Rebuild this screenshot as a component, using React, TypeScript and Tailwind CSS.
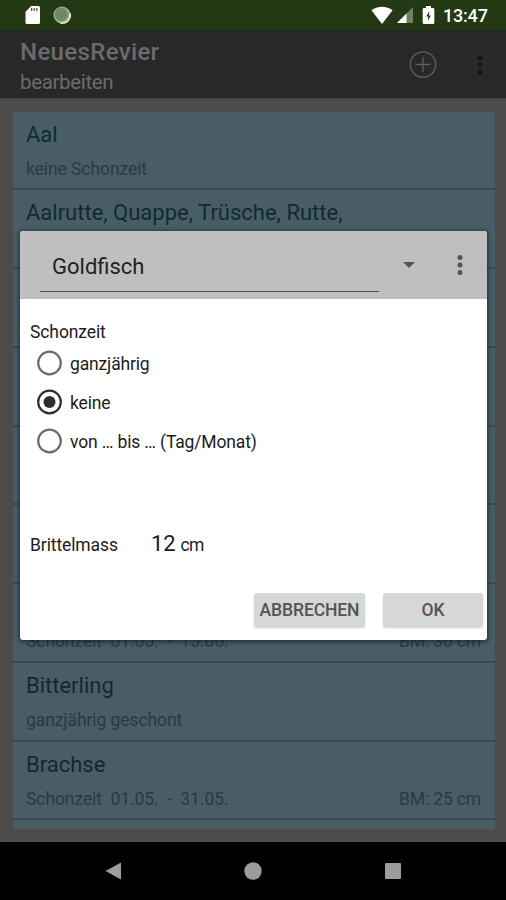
import React, { useState } from 'react';

interface Fish {
  name: string;
  season: string;
  minSize?: string;
}

const fishes: Fish[] = [
  { name: 'Aal', season: 'keine Schonzeit' },
  { name: 'Aalrutte, Quappe, Trüsche, Rutte,', season: '' },
  { name: '', season: '' },
  { name: '', season: '' },
  { name: '', season: '' },
  { name: '', season: '' },
  { name: '', season: 'Schonzeit  01.05.  -  15.06.', minSize: 'BM: 30 cm' },
  { name: 'Bitterling', season: 'ganzjährig geschont' },
  { name: 'Brachse', season: 'Schonzeit  01.05.  -  31.05.', minSize: 'BM: 25 cm' },
];

const seasonOptions = ['ganzjährig', 'keine', 'von … bis … (Tag/Monat)'];

const Dots: React.FC<{ className: string }> = ({ className }) => (
  <svg viewBox="0 0 6 22" className={className} fill="currentColor">
    <circle cx="3" cy="3.4" r="2.5" />
    <circle cx="3" cy="11" r="2.5" />
    <circle cx="3" cy="18.6" r="2.5" />
  </svg>
);

const StatusBar: React.FC = () => (
  <div className="flex h-[30px] shrink-0 items-center bg-[#223914] pl-[23.5px] pr-[18px] text-white">
    <svg viewBox="0 0 18 20" className="h-5 w-[18px]">
      <path d="M7.2 1H14.5Q16 1 16 2.5V17.5Q16 19 14.5 19H3Q1.5 19 1.5 17.5V6.7Z" fill="#fff" />
      <path d="M7.6 3v3M10.2 3v3M12.8 3v3" stroke="#4b5b42" strokeWidth="1.3" />
    </svg>
    <svg viewBox="0 0 20 20" className="ml-[10px] h-5 w-5">
      <circle cx="10" cy="10" r="8.6" fill="#9aac92" />
      <circle cx="9.3" cy="9.3" r="6.6" fill="#70886a" />
      <path d="M18 8.5A8 8 0 0 1 8.5 18" fill="none" stroke="#dfe8da" strokeWidth="1.8" />
    </svg>
    <div className="grow" />
    <svg viewBox="0 0 22 18" className="h-[18px] w-[22px]">
      <path d="M.4 4.3C6.5-.4 15.5-.4 21.6 4.3L11 18Z" fill="#fff" />
    </svg>
    <svg viewBox="0 0 18 18" className="ml-[3px] h-[18px] w-[18px]">
      <path d="M17 1V17H1Z" fill="#6f8066" />
      <path d="M10.5 7.5V17H1Z" fill="#fff" />
    </svg>
    <svg viewBox="0 0 13 20" className="ml-2 h-5 w-[13px]">
      <path d="M4 1H9V3H11Q12.3 3 12.3 4.3V17.7Q12.3 19 11 19H2Q.7 19 .7 17.7V4.3Q.7 3 2 3H4Z" fill="#fff" />
      <path d="M7.3 6L4.2 11.6H6.3L5.8 16L8.9 10.4H6.9Z" fill="#223914" />
    </svg>
    <span className="ml-[8px] mt-px w-[45px] whitespace-nowrap text-[18px] font-medium tracking-[-0.2px]">13:47</span>
  </div>
);

const AppBar: React.FC = () => (
  <div className="flex h-[68px] shrink-0 items-center bg-[#282828] pl-5 pr-[23px] text-[#6b6b6b]">
    <div className="grow pt-[4px]">
      <div className="text-[24px] font-medium leading-[28px] tracking-[0.35px]">NeuesRevier</div>
      <div className="mt-[4px] text-[20.5px] leading-6 tracking-[-0.35px]">bearbeiten</div>
    </div>
    <svg viewBox="0 0 28 28" className="h-7 w-7" fill="none" stroke="#606060" strokeWidth="1.3">
      <circle cx="14" cy="14.5" r="12.7" />
      <path d="M14 7v15M6.5 14.5h15" />
    </svg>
    <Dots className="ml-10 mt-px h-[22px] w-[6px] text-[#151515]" />
  </div>
);

const FishRow: React.FC<{ fish: Fish }> = ({ fish }) => (
  <div className="flex h-[78.75px] shrink-0 flex-col border-b-2 border-[#3e494f] pl-[13.5px] pr-[13.5px] pt-[9px]">
    <div className="h-7 whitespace-pre text-[22px] leading-7 text-[#102a35]">{fish.name}</div>
    <div className="mt-2 flex h-6 justify-between whitespace-pre text-[17.5px] leading-6 tracking-[-0.08px] text-[#2a3b43]">
      <span>{fish.season}</span>
      <span className="tracking-[-0.15px]">{fish.minSize}</span>
    </div>
  </div>
);

const SeasonDialog: React.FC = () => {
  const [selected, setSelected] = useState('keine');

  return (
    <div className="absolute left-5 top-[231px] flex h-[409px] w-[467px] flex-col overflow-hidden rounded-[3px] bg-white text-[#1c1c1c] shadow-[0_1px_4px_1px_rgba(0,25,40,0.65)]">
      <div className="flex h-[68px] shrink-0 items-center bg-[#bfbfbf] pl-5 pr-6 text-[#555]">
        <div className="mb-[3px] flex h-[56px] w-[339px] items-center border-b-[1px] border-[#4f4f4f] pl-3 pt-[7px] text-[22px] text-[#222]">
          Goldfisch
        </div>
        <svg viewBox="0 0 12 6" className="ml-6 h-[6px] w-3" fill="currentColor">
          <path d="M0 0H12L6 6Z" />
        </svg>
        <div className="grow" />
        <Dots className="h-[22px] w-[6px]" />
      </div>

      <div className="flex grow flex-col pl-[10px] text-[17.5px] tracking-[-0.1px]">
        <div className="mt-[21px] h-6 leading-6">Schonzeit</div>
        <div className="mt-[-1px] flex flex-col pl-[6px]">
          {seasonOptions.map((option) => (
            <button key={option} onClick={() => setSelected(option)} className="flex h-[39.4px] items-center gap-[6px]">
              <svg viewBox="0 0 28 28" className="h-7 w-7">
                <circle cx="13.5" cy="14" r="11.3" fill="none" stroke={selected === option ? '#2e2e2e' : '#6c6c6c'} strokeWidth="2.2" />
                {selected === option && <circle cx="13.5" cy="14" r="6" fill="#2e2e2e" />}
              </svg>
              <span className="mt-[2px] whitespace-nowrap tracking-[-0.15px]">{option}</span>
            </button>
          ))}
        </div>
        <div className="mt-[65.5px] flex items-baseline">
          <span className="w-[121px]">Brittelmass</span>
          <span className="text-[22px]">12</span>
          <span className="ml-[5px] tracking-[-0.6px]">cm</span>
        </div>
      </div>

      <div className="mb-[13px] flex shrink-0 justify-end gap-[18px] pr-1 text-[17.5px] font-medium tracking-[-0.1px] text-[#555]">
        <button className="h-[34px] w-[111px] rounded-[3px] bg-[#d6d7d7] shadow-[0_1px_2px_rgba(0,0,0,0.2)]">ABBRECHEN</button>
        <button className="h-[34px] w-[100px] rounded-[3px] bg-[#d6d7d7] shadow-[0_1px_2px_rgba(0,0,0,0.2)]">OK</button>
      </div>
    </div>
  );
};

const NavBar: React.FC = () => (
  <div className="flex h-[58px] shrink-0 items-center justify-between bg-black pl-[105px] pr-[105px] text-[#9c9c9c]">
    <svg viewBox="0 0 16 18" className="h-[18px] w-4" fill="currentColor">
      <path d="M16 0.5V17.5L0.5 9Z" />
    </svg>
    <svg viewBox="0 0 18 18" className="h-[18px] w-[18px]" fill="currentColor">
      <circle cx="9" cy="9" r="8.7" />
    </svg>
    <div className="h-4 w-4 rounded-[1px] bg-[#9c9c9c]" />
  </div>
);

export default function App() {
  return (
    <div className="relative flex h-[900px] w-[506px] flex-col overflow-hidden bg-[#4b4b4b] font-['Roboto',sans-serif]">
      <StatusBar />
      <AppBar />
      <div className="flex min-h-0 grow flex-col border-t border-[#404040] pb-[13px] pl-[12.5px] pr-[11.5px] pt-[12.5px]">
        <div className="flex grow flex-col overflow-hidden bg-[#485d66]">
          {fishes.map((fish, i) => (
            <FishRow key={i} fish={fish} />
          ))}
        </div>
      </div>
      <NavBar />
      <SeasonDialog />
    </div>
  );
}
